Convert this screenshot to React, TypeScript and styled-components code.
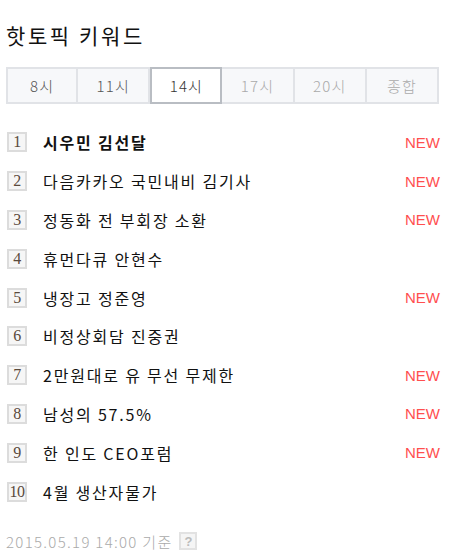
import React from "react";
import styled, { createGlobalStyle } from "styled-components";

const Global = createGlobalStyle`
  body { margin: 0; background: #fff; font-family: "Noto Sans CJK KR", "Noto Sans", sans-serif; }
`;

const Wrap = styled.div`
  width: 456px;
  padding: 0 6px 0 6px;
  box-sizing: border-box;
`;

const Title = styled.h2`
  margin: 0;
  padding-top: 21px;
  height: 46px;
  box-sizing: border-box;
  font-size: 21px;
  font-weight: 400;
  line-height: 28px;
  color: #111;
  letter-spacing: 2.6px;
`;

const Tabs = styled.div`
  display: grid;
  grid-template-columns: repeat(6, 1fr);
  width: 433px;
  height: 37px;
  margin-top: 21px;
`;

const Tab = styled.div<{ $active?: boolean; $dim?: boolean }>`
  display: flex;
  align-items: center;
  justify-content: center;
  box-sizing: border-box;
  border: ${(p) => (p.$active ? "2px solid #b9bdc3" : "2px solid #e1e3e7")};
  margin-left: ${(p) => (p.$active ? "0" : "-2px")};
  position: relative;
  z-index: ${(p) => (p.$active ? 1 : 0)};
  background: ${(p) => (p.$active ? "#fff" : "#f7f8fa")};
  font-size: 15px;
  font-weight: 300;
  letter-spacing: 1.2px;
  color: ${(p) => (p.$active ? "#333" : p.$dim ? "#aaa" : "#555")};
  &:first-child { margin-left: 0; }
`;

const List = styled.ol`
  list-style: none;
  margin: 19px 0 0 0;
  padding: 0;
`;

const Row = styled.li`
  display: flex;
  align-items: center;
  height: 38.8px;
`;

const Badge = styled.span`
  width: 20px;
  height: 20px;
  box-sizing: border-box;
  border: 2px solid #dcdcdc;
  background: #f6f6f6;
  display: flex;
  align-items: center;
  justify-content: center;
  font-family: "Liberation Serif", serif;
  font-size: 16px;
  color: #5a4a3c;
  margin-left: 1px;
  letter-spacing: -0.5px;
`;

const Label = styled.span<{ $bold?: boolean }>`
  margin-left: 16px;
  flex: 1;
  font-size: 16px;
  font-weight: ${(p) => (p.$bold ? 700 : 400)};
  color: #111;
  letter-spacing: 1.8px;
`;

const New = styled.span`
  font-family: "Liberation Sans", Arial, sans-serif;
  font-size: 15px;
  color: #ff4f4f;
  margin-right: 10px;
`;

const Footer = styled.div`
  display: flex;
  align-items: center;
  margin-top: 20px;
  font-size: 15px;
  font-weight: 300;
  color: #aaa;
  letter-spacing: 1.3px;
  gap: 6px;
`;

const Help = styled.span`
  width: 18px;
  height: 18px;
  box-sizing: border-box;
  border: 2px solid #e2e2e2;
  background: #f5f5f5;
  display: flex;
  align-items: center;
  justify-content: center;
  font-family: "Liberation Sans", Arial, sans-serif;
  font-size: 13px;
  font-weight: 700;
  letter-spacing: 0;
  color: #bbb;
  margin-left: 1px;
`;

const tabs = [
  { t: "8시" },
  { t: "11시" },
  { t: "14시", active: true },
  { t: "17시", dim: true },
  { t: "20시", dim: true },
  { t: "종합", dim: true },
];

const items = [
  { t: "시우민 김선달", n: true, b: true },
  { t: "다음카카오 국민내비 김기사", n: true },
  { t: "정동화 전 부회장 소환", n: true },
  { t: "휴먼다큐 안현수" },
  { t: "냉장고 정준영", n: true },
  { t: "비정상회담 진중권" },
  { t: "2만원대로 유 무선 무제한", n: true },
  { t: "남성의 57.5%", n: true },
  { t: "한 인도 CEO포럼", n: true },
  { t: "4월 생산자물가" },
];

export default function App() {
  return (
    <>
      <Global />
      <Wrap>
        <Title>핫토픽 키워드</Title>
        <Tabs>
          {tabs.map((x) => (
            <Tab key={x.t} $active={x.active} $dim={x.dim}>
              {x.t}
            </Tab>
          ))}
        </Tabs>
        <List>
          {items.map((it, i) => (
            <Row key={i}>
              <Badge>{i + 1}</Badge>
              <Label $bold={it.b}>{it.t}</Label>
              {it.n && <New>NEW</New>}
            </Row>
          ))}
        </List>
        <Footer>
          <span>2015.05.19 14:00 기준</span>
          <Help>?</Help>
        </Footer>
      </Wrap>
    </>
  );
}
